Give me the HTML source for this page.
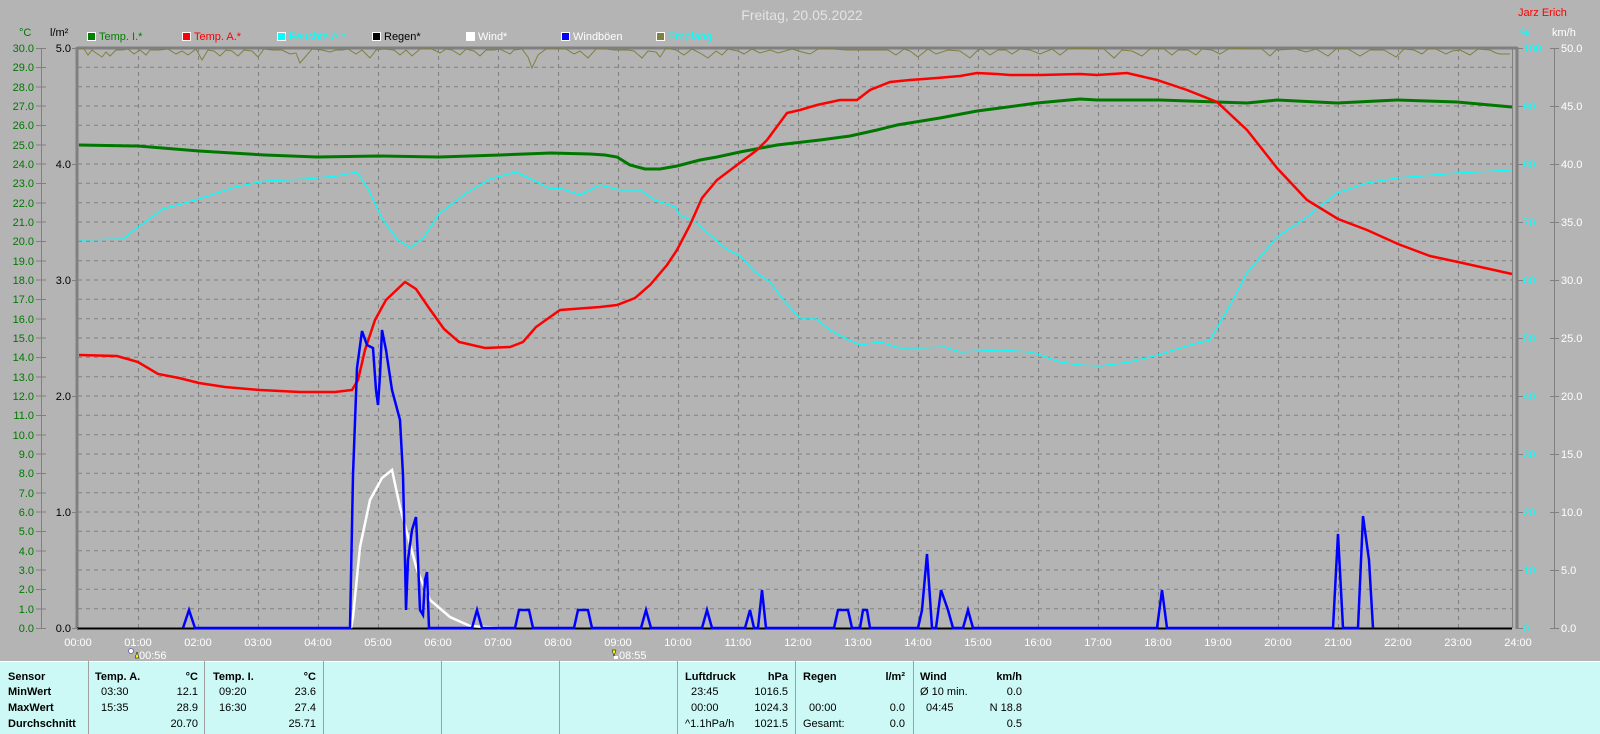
<!DOCTYPE html>
<html><head><meta charset="utf-8"><style>
html,body{margin:0;padding:0;background:#b4b4b4;}
svg{display:block;font-family:"Liberation Sans",sans-serif;}
</style></head><body>
<svg width="1600" height="734" viewBox="0 0 1600 734" xmlns="http://www.w3.org/2000/svg">
<rect width="1600" height="734" fill="#b4b4b4"/>
<text x="802" y="20" font-size="14" fill="#e4e4e4" text-anchor="middle">Freitag, 20.05.2022</text>
<text x="1518" y="16" font-size="11" fill="#ff0000">Jarz Erich</text>
<text x="19" y="36" font-size="11" fill="#007800">°C</text>
<text x="50" y="36" font-size="11" fill="#000">l/m²</text>
<text x="1520" y="36" font-size="11" fill="#00ffff">%</text>
<text x="1552" y="36" font-size="11" fill="#fff">km/h</text>
<g font-size="11">
<rect x="87.5" y="32.5" width="8" height="8" fill="#008000" stroke="#fff"/><text x="99" y="40" fill="#008000">Temp. I.*</text>
<rect x="182.5" y="32.5" width="8" height="8" fill="#ff0000" stroke="#fff"/><text x="194" y="40" fill="#ff0000">Temp. A.*</text>
<rect x="277.5" y="32.5" width="8" height="8" fill="#00ffff" stroke="#fff"/><text x="289" y="40" fill="#00ffff">Feuchte A.*</text>
<rect x="372.5" y="32.5" width="8" height="8" fill="#000" stroke="#fff"/><text x="384" y="40" fill="#000">Regen*</text>
<rect x="466.5" y="32.5" width="8" height="8" fill="#fff" stroke="#fff"/><text x="478" y="40" fill="#fff">Wind*</text>
<rect x="561.5" y="32.5" width="8" height="8" fill="#0000ff" stroke="#fff"/><text x="573" y="40" fill="#fff">Windböen</text>
<rect x="656.5" y="32.5" width="8" height="8" fill="#808040" stroke="#fff"/><text x="668" y="40" fill="#00ffff">Empfang</text>
</g>
<g stroke="#808080" stroke-width="1" stroke-dasharray="4,4">
<path d="M78 608.7H1512M78 589.3H1512M78 570H1512M78 550.7H1512M78 531.3H1512M78 512H1512M78 492.7H1512M78 473.3H1512M78 454H1512M78 434.7H1512M78 415.3H1512M78 396H1512M78 376.7H1512M78 357.3H1512M78 338H1512M78 318.7H1512M78 299.3H1512M78 280H1512M78 260.7H1512M78 241.3H1512M78 222H1512M78 202.7H1512M78 183.3H1512M78 164H1512M78 144.7H1512M78 125.3H1512M78 106H1512M78 86.7H1512M78 67.3H1512"/>
<path d="M138.5 48V628M198.5 48V628M258.5 48V628M318.5 48V628M378.5 48V628M438.5 48V628M498.5 48V628M558.5 48V628M618.5 48V628M678.5 48V628M738.5 48V628M798.5 48V628M858.5 48V628M918.5 48V628M978.5 48V628M1038.5 48V628M1098.5 48V628M1158.5 48V628M1218.5 48V628M1278.5 48V628M1338.5 48V628M1398.5 48V628M1458.5 48V628"/>
</g>
<path d="M77 48H1517" stroke="#808080" stroke-width="3"/>
<path d="M77 47V629" stroke="#808080" stroke-width="3"/>
<path d="M1517 47V629" stroke="#808080" stroke-width="3"/>
<path d="M1512.5 48V628" stroke="#808080" stroke-width="1"/>
<path d="M77 628.5H1512" stroke="#000" stroke-width="2"/>
<path d="M41.5 48V628" stroke="#808080"/>
<g stroke="#808080"><path d="M36 628.5H46M36 609H46M36 589.5H46M36 570H46M36 551H46M36 531.5H46M36 512H46M36 493H46M36 473.5H46M36 454H46M36 435H46M36 415.5H46M36 396H46M36 377H46M36 357.5H46M36 338H46M36 319H46M36 299.5H46M36 280H46M36 261H46M36 241.5H46M36 222H46M36 203H46M36 183.5H46M36 164H46M36 145H46M36 125.5H46M36 106H46M36 87H46M36 67.5H46M36 48.5H46"/>
<path d="M72 628.5H78M72 512.5H78M72 396.5H78M72 280.5H78M72 164.5H78M72 48.5H78"/></g>
<g font-size="11" fill="#007800" text-anchor="end">
<text x="34" y="632">0.0</text><text x="34" y="613">1.0</text><text x="34" y="593">2.0</text><text x="34" y="574">3.0</text><text x="34" y="555">4.0</text><text x="34" y="535">5.0</text><text x="34" y="516">6.0</text><text x="34" y="497">7.0</text><text x="34" y="477">8.0</text><text x="34" y="458">9.0</text><text x="34" y="439">10.0</text><text x="34" y="419">11.0</text><text x="34" y="400">12.0</text><text x="34" y="381">13.0</text><text x="34" y="361">14.0</text><text x="34" y="342">15.0</text><text x="34" y="323">16.0</text><text x="34" y="303">17.0</text><text x="34" y="284">18.0</text><text x="34" y="265">19.0</text><text x="34" y="245">20.0</text><text x="34" y="226">21.0</text><text x="34" y="207">22.0</text><text x="34" y="187">23.0</text><text x="34" y="168">24.0</text><text x="34" y="149">25.0</text><text x="34" y="129">26.0</text><text x="34" y="110">27.0</text><text x="34" y="91">28.0</text><text x="34" y="71">29.0</text><text x="34" y="52">30.0</text>
</g>
<g font-size="11" fill="#000" text-anchor="end">
<text x="71" y="632">0.0</text><text x="71" y="516">1.0</text><text x="71" y="400">2.0</text><text x="71" y="284">3.0</text><text x="71" y="168">4.0</text><text x="71" y="52">5.0</text>
</g>
<path d="M1554.5 48V628" stroke="#808080"/>
<g stroke="#808080"><path d="M1517 628.5H1523M1517 570.5H1523M1517 512.5H1523M1517 454.5H1523M1517 396.5H1523M1517 338.5H1523M1517 280.5H1523M1517 222.5H1523M1517 164.5H1523M1517 106.5H1523M1517 48.5H1523"/>
<path d="M1550 628.5H1559M1550 570.5H1559M1550 512.5H1559M1550 454.5H1559M1550 396.5H1559M1550 338.5H1559M1550 280.5H1559M1550 222.5H1559M1550 164.5H1559M1550 106.5H1559M1550 48.5H1559"/></g>
<g font-size="11" fill="#00ffff">
<text x="1523" y="632">0</text><text x="1523" y="574">10</text><text x="1523" y="516">20</text><text x="1523" y="458">30</text><text x="1523" y="400">40</text><text x="1523" y="342">50</text><text x="1523" y="284">60</text><text x="1523" y="226">70</text><text x="1523" y="168">80</text><text x="1523" y="110">90</text><text x="1523" y="52">100</text>
</g>
<g font-size="11" fill="#fff">
<text x="1561" y="632">0.0</text><text x="1561" y="574">5.0</text><text x="1561" y="516">10.0</text><text x="1561" y="458">15.0</text><text x="1561" y="400">20.0</text><text x="1561" y="342">25.0</text><text x="1561" y="284">30.0</text><text x="1561" y="226">35.0</text><text x="1561" y="168">40.0</text><text x="1561" y="110">45.0</text><text x="1561" y="52">50.0</text>
</g>
<g font-size="11" fill="#fff" text-anchor="middle">
<text x="78" y="646">00:00</text><text x="138" y="646">01:00</text><text x="198" y="646">02:00</text><text x="258" y="646">03:00</text><text x="318" y="646">04:00</text><text x="378" y="646">05:00</text><text x="438" y="646">06:00</text><text x="498" y="646">07:00</text><text x="558" y="646">08:00</text><text x="618" y="646">09:00</text><text x="678" y="646">10:00</text><text x="738" y="646">11:00</text><text x="798" y="646">12:00</text><text x="858" y="646">13:00</text><text x="918" y="646">14:00</text><text x="978" y="646">15:00</text><text x="1038" y="646">16:00</text><text x="1098" y="646">17:00</text><text x="1158" y="646">18:00</text><text x="1218" y="646">19:00</text><text x="1278" y="646">20:00</text><text x="1338" y="646">21:00</text><text x="1398" y="646">22:00</text><text x="1458" y="646">23:00</text><text x="1518" y="646">24:00</text>
</g>
<g font-size="11" fill="#fff">
<circle cx="131" cy="651" r="2.5" fill="#fff" stroke="#6060c0" stroke-width="0.8"/><path d="M135 658L137 652L139 658Z" fill="#ffff00" stroke="#000" stroke-width="0.5"/><text x="139" y="659">00:56</text>
<path d="M612 650L614 656L616 650Z" fill="#ffff00" stroke="#000" stroke-width="0.5"/><rect x="614" y="656" width="4" height="3" fill="#fff"/><text x="619" y="659">08:55</text>
</g>
<polyline fill="none" stroke="#808040" stroke-width="1" points="78,49 84,49 88,55 92,50 96,53 102,57 106,52 110,56 116,50 122,50 128,49 134,54 140,50 146,55 150,50 160,50 168,49 176,54 182,51 188,55 196,49 202,60 208,50 214,51 220,56 226,50 232,51 238,56 244,50 252,51 258,57 264,49 272,50 282,50 290,54 296,53 300,63 306,56 312,49 322,50 330,52 336,50 342,50 348,49 356,54 362,50 370,58 376,50 384,49 394,50 400,55 406,50 412,56 420,49 432,49 440,53 446,49 452,50 460,55 466,49 474,51 480,56 486,50 494,50 500,49 510,54 514,50 522,49 528,57 532,68 538,55 546,49 556,49 566,49 574,54 580,51 588,58 596,49 606,49 614,50 628,50 634,51 642,58 648,51 656,52 660,57 666,48 676,50 684,55 692,49 700,53 708,58 716,51 722,55 728,49 738,51 744,54 752,49 760,53 770,50 778,53 792,49 802,52 810,54 818,49 826,49 834,49 846,50 856,50 868,50 876,50 888,50 896,55 904,49 910,51 918,57 928,49 936,54 948,50 960,51 970,58 978,50 982,49 990,55 998,50 1006,50 1012,54 1020,49 1030,50 1040,54 1052,49 1060,55 1068,49 1080,48 1096,49 1104,49 1114,58 1122,50 1132,51 1142,56 1150,49 1164,49 1172,55 1178,50 1188,50 1196,55 1202,49 1212,50 1220,54 1230,48 1248,49 1262,49 1270,56 1276,50 1296,49 1306,52 1316,49 1328,56 1336,49 1348,49 1360,56 1370,50 1384,50 1396,57 1404,49 1414,50 1422,54 1428,49 1436,49 1446,54 1452,51 1460,50 1470,55 1478,49 1490,50 1496,53 1500,54 1510,54"/>
<polyline fill="none" stroke="#007800" stroke-width="3" points="79,145 138,146 199,151 265,155 317,157 378,156 439,157 500,155 551,153 590,154 605,155 617,157 630,165 645,169 660,169 677,166 700,160 717,157 740,152 777,145 820,140 850,136 877,130 897,125 940,118 977,111 1000,108 1037,103 1080,99 1097,100 1160,100 1217,102 1247,103 1277,100 1337,103 1397,100 1457,102 1512,107"/>
<polyline fill="none" stroke="#00ffff" stroke-width="1.3" points="79,240 123,239 138,227 163,209 199,199 235,187 265,181 306,179 337,176 357,172 368,189 383,220 398,240 411,248 424,237 439,214 465,194 490,179 516,172 531,179 551,189 560,188 580,195 600,185 620,190 640,190 655,200 675,207 680,215 695,222 710,235 725,248 740,256 755,272 770,282 785,302 800,318 815,318 830,330 845,338 860,345 880,342 900,348 920,348 945,347 960,352 1000,350 1030,352 1040,355 1060,362 1080,365 1100,366 1130,362 1158,355 1190,345 1210,340 1230,305 1247,273 1277,237 1307,217 1337,193 1367,183 1397,178 1457,173 1512,170"/>
<polyline fill="none" stroke="#ff0000" stroke-width="2.5" points="79,355 117,356 138,362 158,374 179,378 199,383 225,387 260,390 300,392 335,392 352,390 358,380 365,350 375,320 386,300 405,282 416,289 429,308 444,329 459,342 485,348 510,347 523,342 536,327 560,310 600,307 617,305 635,298 650,285 667,265 677,250 690,225 702,198 717,180 737,165 757,150 767,140 787,113 800,110 817,105 840,100 857,100 870,90 890,82 910,80 937,78 960,76 977,73 997,74 1010,75 1040,75 1080,74 1097,75 1127,73 1157,80 1187,90 1217,102 1247,130 1277,168 1307,200 1338,219 1367,230 1398,244 1430,256 1458,262 1512,274"/>
<polyline fill="none" stroke="#ffffff" stroke-width="2.5" points="351,628 353,617 360,547 370,500 382,478 392,470 400,507 407,533 417,570 430,600 450,617 470,626 500,628"/>
<polyline fill="none" stroke="#0000ff" stroke-width="2.5" points="183,628 189,610 195,628 350,628 353,475 357,368 362,331 367,345 373,348 376,390 378,405 380,375 382,330 386,350 392,390 400,420 403,475 405,560 406,610 408,560 412,530 416,517 418,560 420,610 423,615 425,580 427,572 429,628 472,628 477,610 482,628 515,628 519,610 529,610 533,628 574,628 578,610 588,610 592,628 641,628 646,610 651,628 702,628 707,610 712,628 745,628 750,610 754,628 758,628 762,590 766,628 834,628 838,610 848,610 852,628 860,628 863,610 867,610 870,628 918,628 922,610 927,554 932,628 936,628 941,590 948,610 953,628 963,628 968,610 973,628 1157,628 1162,590 1167,628 1333,628 1338,534 1343,628 1358,628 1363,516 1369,560 1373,628"/>
<rect x="0" y="661" width="1600" height="73" fill="#ccf9f5"/>
<path d="M0 661.5H1600" stroke="#fff"/>
<g stroke="#a0a0a0"><path d="M88.5 661V734M204.5 661V734M323.5 661V734M441.5 661V734M559.5 661V734M677.5 661V734M795.5 661V734M913.5 661V734"/></g>
<g font-size="11" fill="#000">
<g font-weight="bold"><text x="8" y="680">Sensor</text><text x="8" y="695">MinWert</text><text x="8" y="711">MaxWert</text><text x="8" y="727">Durchschnitt</text>
<text x="95" y="680">Temp. A.</text><text x="198" y="680" text-anchor="end">°C</text>
<text x="213" y="680">Temp. I.</text><text x="316" y="680" text-anchor="end">°C</text>
<text x="685" y="680">Luftdruck</text><text x="788" y="680" text-anchor="end">hPa</text>
<text x="803" y="680">Regen</text><text x="905" y="680" text-anchor="end">l/m²</text>
<text x="920" y="680">Wind</text><text x="1022" y="680" text-anchor="end">km/h</text></g>
<text x="101" y="695">03:30</text><text x="198" y="695" text-anchor="end">12.1</text>
<text x="101" y="711">15:35</text><text x="198" y="711" text-anchor="end">28.9</text>
<text x="198" y="727" text-anchor="end">20.70</text>
<text x="219" y="695">09:20</text><text x="316" y="695" text-anchor="end">23.6</text>
<text x="219" y="711">16:30</text><text x="316" y="711" text-anchor="end">27.4</text>
<text x="316" y="727" text-anchor="end">25.71</text>
<text x="691" y="695">23:45</text><text x="788" y="695" text-anchor="end">1016.5</text>
<text x="691" y="711">00:00</text><text x="788" y="711" text-anchor="end">1024.3</text>
<text x="685" y="727">^1.1hPa/h</text><text x="788" y="727" text-anchor="end">1021.5</text>
<text x="809" y="711">00:00</text><text x="905" y="711" text-anchor="end">0.0</text>
<text x="803" y="727">Gesamt:</text><text x="905" y="727" text-anchor="end">0.0</text>
<text x="920" y="695">Ø 10 min.</text><text x="1022" y="695" text-anchor="end">0.0</text>
<text x="926" y="711">04:45</text><text x="1022" y="711" text-anchor="end">N 18.8</text>
<text x="1022" y="727" text-anchor="end">0.5</text>
</g>
</svg>
</body></html>
